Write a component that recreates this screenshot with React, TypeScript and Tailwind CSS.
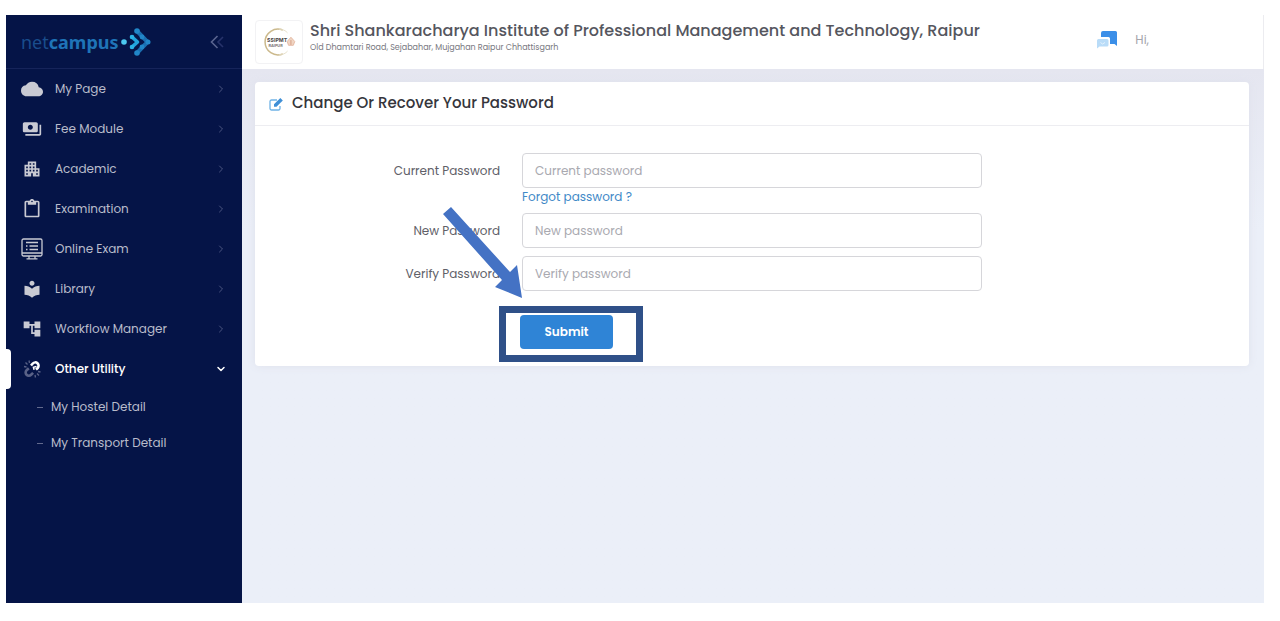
import { useId, type ReactNode } from 'react';
import {
  MdAccountTree,
  MdApartment,
  MdCloud,
  MdContentPaste,
  MdLocalLibrary,
  MdPayments,
} from 'react-icons/md';
import { ChevronDown, ChevronRight } from 'lucide-react';

function OnlineExamIcon() {
  return (
    <svg viewBox="0 0 22 22" className="size-[22px]" fill="none" stroke="currentColor" strokeWidth="1.3" aria-hidden="true">
      <rect x="1" y="1" width="20" height="17" rx="1.5" />
      <path d="M5 4.500h12M8.500 8h8.500M8.500 11.500h8.500M5 8h1.500M5 11.500h1.500M1 15h20M8 18v2.500M14 18v2.500M5.500 20.800h11" />
    </svg>
  );
}

function UtilityIcon() {
  return (
    <svg viewBox="0 0 20 20" className="size-5" fill="none" aria-hidden="true">
      <path d="M9 6.500l1.800-2a3.300 3.300 0 0 1 4.900 4.500l-1.700 1.600" stroke="#ffffff" strokeWidth="2.600" />
      <path d="M14.500 7.500l-3 .8.600 2.400" stroke="#ffffff" strokeWidth="1.600" />
      <path d="M6.800 9.200l-2.200 2a3.200 3.200 0 0 0 4.500 4.600l2-2" stroke="#5a6287" strokeWidth="2.600" />
      <path d="M2 7.500l2.500.5M3.500 3.500l2 2M7 1.500l.5 2.500M13 16l.5 2.500M15 14.500l2 2M16 12.500l2.500.5" stroke="#5a6287" strokeWidth="1.300" />
    </svg>
  );
}

function EditIcon() {
  return (
    <svg viewBox="0 0 16 16" className="size-4" aria-hidden="true">
      <path d="M12 10v2.500a1.500 1.500 0 0 1-1.500 1.500h-7A1.500 1.500 0 0 1 2 12.500v-7A1.500 1.500 0 0 1 3.500 4H9" fill="none" stroke="#6fb2e6" strokeWidth="1.300" />
      <path d="M6 8.200L12.300 2l2.500 2.500-6.300 6.200H6z" fill="#3f8fd6" />
    </svg>
  );
}

function BrandMark() {
  return (
    <svg viewBox="0 0 30 30" className="ml-[2px] size-[30px]" fill="none" strokeLinecap="round" strokeLinejoin="round" aria-hidden="true">
      <path d="M16 4L26.500 15 16 26" stroke="#1b6eb0" strokeWidth="4" />
      <path d="M11 10l5.500 5-5.500 5" stroke="#22a3dc" strokeWidth="3.600" />
      <circle cx="16" cy="4" r="2.800" fill="#2186c8" />
      <circle cx="16" cy="26" r="2.800" fill="#2186c8" />
      <circle cx="21" cy="10" r="2.400" fill="#2186c8" />
      <circle cx="21" cy="20" r="2.400" fill="#2186c8" />
      <circle cx="27" cy="15" r="2.500" fill="#2186c8" />
      <circle cx="11" cy="10" r="2.300" fill="#2bb2e6" />
      <circle cx="11" cy="20" r="2.300" fill="#2bb2e6" />
      <circle cx="3" cy="15" r="2.800" fill="#4cc9ef" />
    </svg>
  );
}

function CollapseIcon() {
  return (
    <svg viewBox="0 0 14 14" className="size-[14px]" fill="none" strokeWidth="1.600" aria-hidden="true">
      <path d="M7.500 1L1.500 7l6 6" stroke="#5a6590" />
      <path d="M13 2L8 7l5 5" stroke="#27336a" />
    </svg>
  );
}

function InstituteCrest() {
  return (
    <svg viewBox="0 0 48 44" className="h-full w-full" role="img" aria-label="SSIPMT Raipur">
      <path d="M28 9.500a13.500 13.500 0 1 0 0 25" fill="none" stroke="#cbb98c" strokeWidth="1.600" />
      <path d="M24 8.500c4 0 7 1.600 9 4" fill="none" stroke="#e6dfca" strokeWidth="1" />
      <path d="M24 35.500c4 0 7-1.600 9-4" fill="none" stroke="#e6dfca" strokeWidth="1" />
      <text x="11.500" y="22" fontSize="5.500" fontWeight="700" fill="#4c4748" fontFamily="Inter, sans-serif">SSIPMT</text>
      <text x="13" y="27" fontSize="4" fontWeight="700" fill="#777274" fontFamily="Inter, sans-serif">RAIPUR</text>
      <path d="M36.500 17l4 4.500-1.500 4h-5l-1.500-4z" fill="#f0d5c3" stroke="#dfae95" strokeWidth=".8" />
      <path d="M36.500 20v5" stroke="#d49c82" strokeWidth="1" />
    </svg>
  );
}

function ChatIcon() {
  return (
    <svg viewBox="0 0 20 18" className="h-[18px] w-5" aria-hidden="true">
      <path d="M6 0h12.500A1.500 1.500 0 0 1 20 1.500V15l-2.500-2H13V7.500a1.500 1.500 0 0 0-1.500-1.500H4V2a2 2 0 0 1 2-2z" fill="#3b8fe8" />
      <path d="M1.500 8H10a1.500 1.500 0 0 1 1.500 1.500V14a1.500 1.500 0 0 1-1.500 1.500H2.500L0 17.500v-8A1.500 1.500 0 0 1 1.500 8z" fill="#b9dcf8" />
      <path d="M3.500 11.500l2 1.500 2.500-1.500" fill="none" stroke="#e4f2fd" strokeWidth="1" />
    </svg>
  );
}

const menu: { label: string; icon: ReactNode }[] = [
  { label: 'My Page', icon: <MdCloud className="size-[22px]" /> },
  { label: 'Fee Module', icon: <MdPayments className="size-5" /> },
  { label: 'Academic', icon: <MdApartment className="size-5" /> },
  { label: 'Examination', icon: <MdContentPaste className="size-5" /> },
  { label: 'Online Exam', icon: <OnlineExamIcon /> },
  { label: 'Library', icon: <MdLocalLibrary className="size-5" /> },
  { label: 'Workflow Manager', icon: <MdAccountTree className="size-5" /> },
];

const subMenu = ['My Hostel Detail', 'My Transport Detail'];

function Sidebar() {
  return (
    <aside className="w-[236px] shrink-0 bg-[#051447] text-xs text-[#b9bccb]">
      <div className="flex h-[54px] items-center justify-between border-b border-[#16245a] pr-[18px] pl-[15px]">
        <a href="#" className="flex items-center font-['Noto_Sans',sans-serif] text-lg text-[#1a4d8c]">
          <span>net</span>
          <span className="font-bold text-[#1f74b8]">campus</span>
          <BrandMark />
        </a>
        <button type="button" aria-label="Collapse menu">
          <CollapseIcon />
        </button>
      </div>
      <nav>
        <ul>
          {menu.map((item) => (
            <li key={item.label}>
              <a href="#" className="flex h-10 items-center pr-[15px] pl-[15px]">
                <span className="flex w-[22px] justify-center text-[#c9cad3]">{item.icon}</span>
                <span className="ml-3 flex-1">{item.label}</span>
                <ChevronRight className="size-3 text-[#4b5580]" />
              </a>
            </li>
          ))}
          <li>
            <a href="#" className="relative flex h-10 items-center pr-[15px] pl-[15px] font-medium text-white">
              <span className="absolute top-0 left-0 h-10 w-[5px] rounded-r bg-white" />
              <span className="flex w-[22px] justify-center">
                <UtilityIcon />
              </span>
              <span className="ml-3 flex-1">Other Utility</span>
              <ChevronDown className="size-3" strokeWidth={3} />
            </a>
            <ul>
              {subMenu.map((label) => (
                <li key={label}>
                  <a href="#" className="flex h-9 items-center pl-[31px]">
                    <span className="mr-2 h-px w-[6px] bg-[#626a8d]" />
                    {label}
                  </a>
                </li>
              ))}
            </ul>
          </li>
        </ul>
      </nav>
    </aside>
  );
}

function PasswordRow({ label, placeholder, children }: { label: string; placeholder: string; children?: ReactNode }) {
  const id = useId();
  return (
    <div className="grid grid-cols-[267fr_460fr_267fr]">
      <label htmlFor={id} className="pr-[22px] text-right leading-[35px]">
        {label}
      </label>
      <div>
        <input
          id={id}
          type="password"
          placeholder={placeholder}
          className="block h-[35px] w-full rounded border border-[#d6d6da] bg-white px-3 text-xs placeholder:text-[#a9a9b0]"
        />
        {children}
      </div>
    </div>
  );
}

function Callout() {
  return (
    <>
      <span className="pointer-events-none absolute -top-[9px] -right-[30px] -bottom-[13px] -left-[21px] border-[7px] border-[#2f5088]" />
      <svg
        viewBox="0 0 80 92"
        className="pointer-events-none absolute -top-[108px] -left-[77px] h-[92px] w-20"
        aria-hidden="true"
      >
        <path d="M0 7L8 0L67 65L74 58L79 91L52 80L59 73Z" fill="#4472c4" />
      </svg>
    </>
  );
}

export default function App() {
  return (
    <div className="flex min-h-screen bg-white pt-[15px] pr-4 pb-[18px] pl-[6px] font-[Poppins,Inter,sans-serif]">
      <Sidebar />
      <div className="flex min-w-0 flex-1 flex-col bg-[#ebeff8]">
        <header className="flex h-[54px] items-center border-r border-[#ececf0] bg-white pr-[114px] pl-[13px]">
          <div className="h-11 w-12 shrink-0 rounded border border-[#f2f2f4]">
            <InstituteCrest />
          </div>
          <div className="mb-2 ml-[7px] flex-1 text-[#55565e]">
            <h1 className="text-base leading-5 font-medium">
              Shri Shankaracharya Institute of Professional Management and Technology, Raipur
            </h1>
            <p className="text-[8px] leading-[14px] text-[#777780]">
              Old Dhamtari Road, Sejabahar, Mujgahan Raipur Chhattisgarh
            </p>
          </div>
          <button type="button" aria-label="Messages" className="mb-1">
            <ChatIcon />
          </button>
          <span className="mb-1 ml-[18px] text-xs text-[#a5a5ac]">Hi,</span>
        </header>
        <main className="flex-1 bg-linear-to-b from-[#e5e6f0] to-[#ebeff8] to-30% pt-[13px] pr-[15px] pl-[13px]">
          <section className="rounded bg-white shadow-[0_0_8px_#dfe1ec]">
            <h2 className="flex h-11 items-center gap-2 border-b border-[#ededf1] pl-[13px] text-[15px] font-medium text-[#35353b]">
              <EditIcon />
              Change Or Recover Your Password
            </h2>
            <form className="pt-[27px] pb-[17px] text-xs text-[#606068]" onSubmit={(e) => e.preventDefault()}>
              <PasswordRow label="Current Password" placeholder="Current password">
                <a href="#" className="block h-[25px] leading-[17px] text-[#4189c7]">
                  Forgot password ?
                </a>
              </PasswordRow>
              <PasswordRow label="New Password" placeholder="New password" />
              <div className="mt-2">
                <PasswordRow label="Verify Password" placeholder="Verify password" />
              </div>
              <div className="mt-6 grid grid-cols-[265fr_462fr_267fr]">
                <div className="relative col-start-2 w-[93px]">
                  <button
                    type="submit"
                    className="block h-[34px] w-full rounded-sm bg-[#2f84d6] text-xs font-semibold text-white"
                  >
                    Submit
                  </button>
                  <Callout />
                </div>
              </div>
            </form>
          </section>
        </main>
      </div>
    </div>
  );
}
